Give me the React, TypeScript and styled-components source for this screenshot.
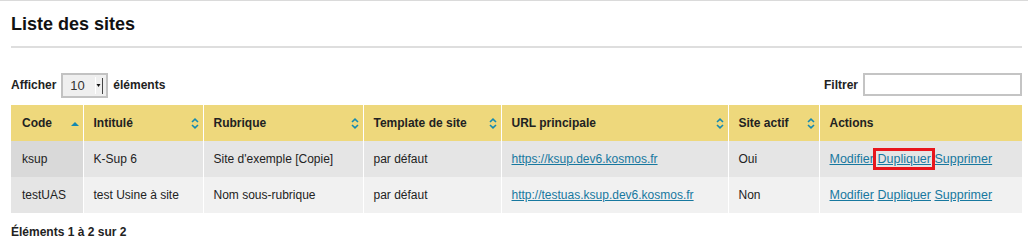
import React from 'react';
import styled, { createGlobalStyle } from 'styled-components';

const GlobalStyle = createGlobalStyle`
    html, body {
        margin: 0;
        padding: 0;
        background: #fff;
    }
    body {
        font-family: 'Liberation Sans', Arial, sans-serif;
        font-size: 12px;
        color: #222;
    }
`;

const Page = styled.div`
    border-top: 1px solid #dadada;
    padding: 0 6px 0 11px;
`;

const Title = styled.h1`
    margin: 0;
    padding: 12px 0 11px 0;
    font-size: 18px;
    line-height: 22px;
    font-weight: bold;
    color: #111;
    border-bottom: 2px solid #dedede;
`;

const Toolbar = styled.div`
    display: flex;
    justify-content: space-between;
    align-items: center;
    margin-top: 24px;
    height: 26px;
`;

const Label = styled.label`
    display: flex;
    align-items: center;
    gap: 5px;
    font-weight: bold;
    color: #222;
`;

const FakeSelect = styled.div`
    box-sizing: border-box;
    display: flex;
    align-items: center;
    justify-content: space-between;
    width: 47px;
    height: 25px;
    padding: 0 3px 0 7px;
    border: 2px solid #c2c2c2;
    background: #efefef;
    font-weight: normal;
    font-size: 13px;
    color: #333;
`;

const SelectArrow = styled.svg`
    display: block;
`;

const FilterInput = styled.input`
    box-sizing: border-box;
    width: 159px;
    height: 23px;
    margin: -2px 0 0 0;
    border: 2px solid #c4c4c4;
    background: #fff;
    font-family: inherit;
    font-size: 12px;
`;

const Table = styled.table`
    margin-top: 7px;
    width: 1011px;
    table-layout: fixed;
    border-collapse: collapse;
    border-spacing: 0;
`;

const Th = styled.th`
    height: 36px;
    padding: 0 4px 0 10px;
    background: #eed87c;
    border-left: 1px solid #fff;
    text-align: left;
    font-weight: bold;
    font-size: 12px;
    color: #222;
    &:first-child {
        border-left: none;
        padding-left: 11px;
    }
`;

const ThInner = styled.div`
    display: flex;
    align-items: center;
    justify-content: space-between;
`;

const Row = styled.tr<{ $even: boolean }>`
    background: ${(p) => (p.$even ? '#f1f1f1' : '#e5e5e5')};
    td:first-child {
        background: ${(p) => (p.$even ? '#e5e5e5' : '#d9d9d9')};
    }
`;

const Td = styled.td`
    height: 36px;
    padding: 0 4px 0 10px;
    border-left: 1px solid #fff;
    color: #222;
    font-size: 12px;
    white-space: nowrap;
    &:first-child {
        border-left: none;
        padding-left: 11px;
    }
`;

const Link = styled.a`
    color: #17789f;
    text-decoration: underline;
`;

const Actions = styled.span`
    font-size: 12.5px;
`;

const ActionLink = styled(Link)<{ $highlight?: boolean }>`
    ${(p) => p.$highlight && 'outline: 3px solid #e8161c; outline-offset: 1px;'}
`;

const Footer = styled.div`
    margin-top: 12px;
    font-weight: bold;
    color: #222;
`;

type Sort = 'asc' | 'both' | 'none';

const SortIcon: React.FC<{ sort: Sort }> = ({ sort }) => {
    if (sort === 'none') return null;
    if (sort === 'asc') {
        return (
            <svg width="8" height="5" viewBox="0 0 8 5">
                <path d="M0 5 L4 1 L8 5 Z" fill="#1589b0" />
            </svg>
        );
    }
    return (
        <svg width="8" height="11" viewBox="0 0 8 11">
            <path d="M1 4 L4 1.2 L7 4" fill="none" stroke="#1589b0" strokeWidth="1.6" />
            <path d="M1 7 L4 9.8 L7 7" fill="none" stroke="#1589b0" strokeWidth="1.6" />
        </svg>
    );
};

const columns: { label: string; width: number; sort: Sort }[] = [
    { label: 'Code', width: 72, sort: 'asc' },
    { label: 'Intitulé', width: 120, sort: 'both' },
    { label: 'Rubrique', width: 160, sort: 'both' },
    { label: 'Template de site', width: 138, sort: 'both' },
    { label: 'URL principale', width: 227, sort: 'both' },
    { label: 'Site actif', width: 91, sort: 'both' },
    { label: 'Actions', width: 203, sort: 'none' },
];

const rows = [
    { code: 'ksup', title: 'K-Sup 6', section: "Site d'exemple [Copie]", template: 'par défaut', url: 'https://ksup.dev6.kosmos.fr', active: 'Oui' },
    { code: 'testUAS', title: 'test Usine à site', section: 'Nom sous-rubrique', template: 'par défaut', url: 'http://testuas.ksup.dev6.kosmos.fr', active: 'Non' },
];

const App: React.FC = () => {
    return (
        <>
            <GlobalStyle />
            <Page>
                <Title>Liste des sites</Title>
                <Toolbar>
                    <Label>
                        Afficher
                        <FakeSelect>
                            10
                            <SelectArrow width="8" height="17" viewBox="0 0 8 17">
                                <rect x="0" y="0" width="1" height="17" fill="#fff" />
                                <rect x="7" y="1" width="1" height="16" fill="#444" />
                                <path d="M1.5 7 L5.5 7 L3.5 10 Z" fill="#111" />
                            </SelectArrow>
                        </FakeSelect>
                        éléments
                    </Label>
                    <Label>
                        Filtrer
                        <FilterInput type="text" />
                    </Label>
                </Toolbar>
                <Table>
                    <colgroup>
                        {columns.map((c) => (
                            <col key={c.label} style={{ width: c.width }} />
                        ))}
                    </colgroup>
                    <thead>
                        <tr>
                            {columns.map((c) => (
                                <Th key={c.label}>
                                    <ThInner>
                                        <span>{c.label}</span>
                                        <SortIcon sort={c.sort} />
                                    </ThInner>
                                </Th>
                            ))}
                        </tr>
                    </thead>
                    <tbody>
                        {rows.map((r, i) => (
                            <Row key={r.code} $even={i % 2 === 1}>
                                <Td>{r.code}</Td>
                                <Td>{r.title}</Td>
                                <Td>{r.section}</Td>
                                <Td>{r.template}</Td>
                                <Td>
                                    <Link href="#">{r.url}</Link>
                                </Td>
                                <Td>{r.active}</Td>
                                <Td>
                                    <Actions>
                                        <ActionLink href="#">Modifier</ActionLink>{' '}
                                        <ActionLink href="#" $highlight={i === 0}>
                                            Dupliquer
                                        </ActionLink>{' '}
                                        <ActionLink href="#">Supprimer</ActionLink>
                                    </Actions>
                                </Td>
                            </Row>
                        ))}
                    </tbody>
                </Table>
                <Footer>Éléments 1 à 2 sur 2</Footer>
            </Page>
        </>
    );
};

export default App;
